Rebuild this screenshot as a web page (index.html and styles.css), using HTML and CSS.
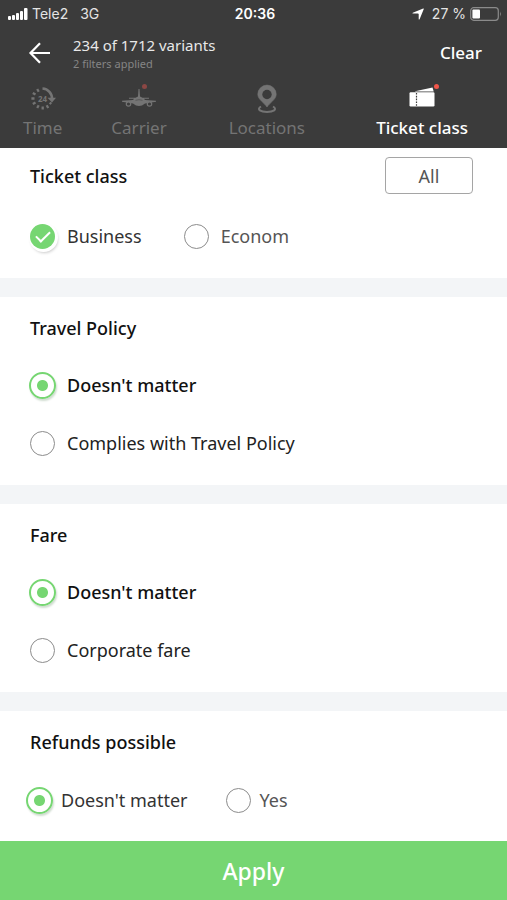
FILE: index.html
```html
<!DOCTYPE html>
<html lang="en">
<head>
<meta charset="utf-8">
<meta name="viewport" content="width=device-width, initial-scale=1">
<title>Filters</title>
<link rel="stylesheet" href="styles.css">
</head>
<body>
<header class="top">
  <div class="status">
    <div class="status-left">
      <svg class="signal" width="20" height="12" viewBox="0 0 20 12" fill="#fff" aria-hidden="true"><rect x="0" y="8" width="3" height="4" rx="1"/><rect x="4" y="7" width="3" height="5" rx="1"/><rect x="8" y="5" width="3" height="7" rx="1"/><rect x="12" y="3" width="3" height="9" rx="1"/><rect x="16" y="0" width="3.500" height="12" rx="1"/></svg>
      <span>Tele2</span>
      <span class="network">3G</span>
    </div>
    <time class="clock">20:36</time>
    <div class="status-right">
      <svg width="12" height="12" viewBox="0 0 12 12" fill="#fff" aria-hidden="true"><path d="M11.200.6Q12 .3 11.700 1.200L7.600 11.200Q7 12 6.700 11.200V5.900Q6.600 5.500 6 5.500H.8Q0 5.200.8 4.700z"/></svg>
      <span>27 %</span>
      <svg width="32" height="14" viewBox="0 0 32 14" aria-hidden="true"><rect x=".7" y=".7" width="27.600" height="12.600" rx="3" fill="none" stroke="#8b8b8b" stroke-width="1.200"/><rect x="2.400" y="2.400" width="7.600" height="9.200" rx="1" fill="#fff"/><path d="M30 4.600q1.800 2.400 0 4.800z" fill="#8b8b8b"/></svg>
    </div>
  </div>
  <div class="bar">
    <button class="back" type="button" aria-label="Back"><svg width="22" height="22" viewBox="0 0 22 22" fill="none" stroke="#fff" stroke-width="2.200"><path d="M12 1.200 2.500 11l9.500 9.800M2.500 11H22"/></svg></button>
    <div class="summary">
      <h1 class="count">234 of 1712 variants</h1>
      <p class="applied">2 filters applied</p>
    </div>
    <button class="clear" type="button">Clear</button>
  </div>
  <nav class="tabs">
    <a class="tab" href="#time">
      <svg width="26" height="26" viewBox="0 0 26 26" fill="none" stroke="#747474" aria-hidden="true"><path d="M12.500 2.500A10 10 0 0 1 22 13" stroke-width="2.600"/><path d="M17.500 11.800H26l-4 4.800z" fill="#747474" stroke="none"/><path d="M8.700 5.700 7.200 3M5.500 8.500 2.800 7M4.500 12.500H1.400M5.500 16.500l-2.700 1.500M8.700 19.300 7.200 22M12.700 20.500v3M16.700 19.300l1.500 2.700M19.600 16.700l1.800 1.200" stroke-width="2.300"/><text x="12.500" y="15.500" text-anchor="middle" class="hours">24</text></svg>
      <span>Time</span>
    </a>
    <a class="tab carrier" href="#carrier">
      <span class="glyph"><svg width="36" height="26" viewBox="0 2 36 26" fill="#747474" aria-hidden="true"><path d="M17.500 5h1l.5 7.500 2.500 1.200H28v1h-5l1 1.300 11 .8v1l-11 1.700q-3 2.500-6 2.500t-6-2.500L1 17.800v-1l11-.8 1-1.300H8v-1h6.500l2.500-1.200z"/><path d="M14.500 16.300q3.500-1.200 7 0" fill="none" stroke="#3b3b3b" stroke-width=".5"/><g fill="#3b3b3b" stroke="#747474" stroke-width="1.200"><circle cx="7.500" cy="20" r="2.200"/><circle cx="28.500" cy="20" r="2.200"/></g></svg><i class="dot dim"></i></span>
      <span>Carrier</span>
    </a>
    <a class="tab locations" href="#locations">
      <svg width="22" height="30" viewBox="0 0 22 30" fill="none" stroke="#747474" aria-hidden="true"><path d="M11 23C8 18.500 1.800 15.500 1.800 10.300a9.200 9.200 0 0 1 18.400 0C20.200 15.500 14 18.500 11 23z" fill="#747474" stroke-width=".6"/><circle cx="11" cy="10.500" r="4.700" fill="#3b3b3b" stroke="none"/><path d="M5 22.500c-5 3 0 5.500 6 5.500s11-2.500 6-5.500" stroke-width="2"/></svg>
      <span>Locations</span>
    </a>
    <a class="tab active" href="#class" aria-current="page">
      <span class="glyph"><svg width="26" height="26" viewBox="0 0 26 26" fill="#fff" aria-hidden="true"><path d="M6 5.300 23.500 1.500 24.700 5.500H6z"/><rect x=".5" y="6.300" width="25" height="14.200" rx="1.200"/><path d="M7.500 7v13" stroke="#3b3b3b" stroke-width="1.200" stroke-dasharray="1.600 1.200"/></svg><i class="dot"></i></span>
      <span>Ticket class</span>
    </a>
  </nav>
</header>
<main>
  <section class="card first">
    <div class="card-head"><h2>Ticket class</h2><button class="all" type="button">All</button></div>
    <div class="row">
      <label class="option"><input type="checkbox" checked><span class="soft">Business</span></label>
      <label class="option"><input type="checkbox"><span class="muted">Econom</span></label>
    </div>
  </section>
  <section class="card">
    <h2>Travel Policy</h2>
    <div class="stack">
      <label class="option"><input type="radio" name="policy" checked><span class="strong">Doesn't matter</span></label>
      <label class="option"><input type="radio" name="policy"><span>Complies with Travel Policy</span></label>
    </div>
  </section>
  <section class="card">
    <h2>Fare</h2>
    <div class="stack">
      <label class="option"><input type="radio" name="fare" checked><span class="strong">Doesn't matter</span></label>
      <label class="option"><input type="radio" name="fare"><span>Corporate fare</span></label>
    </div>
  </section>
  <section class="card last">
    <h2>Refunds possible</h2>
    <div class="row tight">
      <label class="option"><input type="radio" name="refund" checked><span class="soft">Doesn't matter</span></label>
      <label class="option"><input type="radio" name="refund"><span class="muted">Yes</span></label>
    </div>
  </section>
</main>
<button class="apply" type="submit">Apply</button>
</body>
</html>
```

FILE: styles.css
```css
* { box-sizing: border-box; }
body {
  margin: 0;
  min-height: 100vh;
  display: flex;
  flex-direction: column;
  background: #f3f5f7;
  color: #222;
  font: 18px/24px "Noto Sans", "Open Sans", sans-serif;
}
h1, h2, p { margin: 0; }
button { font: inherit; border: 0; padding: 0; background: none; color: inherit; cursor: pointer; }
svg { display: block; }

.top { background: #3b3b3b; color: #fff; padding-bottom: 8px; }
.status {
  display: grid;
  grid-template-columns: 1fr auto 1fr;
  align-items: center;
  height: 28px;
  padding: 0 5px 0 8px;
  font: 14px/20px Inter, sans-serif;
  color: #e4e4e4;
}
.status-left, .status-right { display: flex; align-items: center; gap: 4px; }
.status-right { justify-content: flex-end; gap: 8px; }
.status-right span { margin-right: -4px; }
.network { margin-left: 8px; }
.clock { font-weight: 600; color: #fff; }
.bar { display: flex; align-items: center; height: 50px; padding: 0 25px 0 28px; }
.back { margin-right: 23px; }
.summary { flex: 1; }
.count { font-size: 15px; line-height: 22px; font-weight: 400; color: #e8e8e8; }
.applied { font-size: 11px; line-height: 16px; color: #858585; }
.clear { font-size: 17px; font-weight: 500; }
.tabs { display: flex; gap: 49px; padding: 6px 39px 0 23px; }
.tab {
  display: flex;
  flex-direction: column;
  align-items: center;
  gap: 2px;
  color: #747474;
  font-size: 17px;
  text-decoration: none;
}
.tab svg { height: 30px; }
.locations { margin-left: 13px; }
.tab.active { margin-left: auto; color: #fff; font-weight: 500; }
.hours { font: 700 8px "Noto Sans", sans-serif; fill: #747474; stroke: none; }
.glyph { position: relative; }
.dot { position: absolute; top: 0; right: -4px; width: 5px; height: 5px; border-radius: 50%; background: #f0564a; }
.dot.dim { right: 10px; background: #8b4744; }

main { display: flex; flex-direction: column; gap: 19px; flex: 1; }
.card { background: #fff; padding: 18px 30px 29px; }
.card.first { padding-top: 9px; }
.card.last { flex: 1; padding-bottom: 28px; }
.card-head { display: flex; justify-content: space-between; align-items: center; padding-right: 4px; }
h2 { font-size: 18px; line-height: 26px; font-weight: 500; color: #111; }
.all { width: 88px; height: 37px; border: 1px solid #a5a5a5; border-radius: 4px; color: #555; }
.row { display: flex; gap: 42px; margin-top: 29px; }
.stack { display: flex; flex-direction: column; gap: 32px; margin-top: 31px; }
.row.tight { gap: 38px; margin: 32px 0 0 -3px; }
.option { display: flex; align-items: center; gap: 12px; height: 26px; }
.tight .option { gap: 9px; }
.strong { color: #111; font-weight: 500; }
.soft { color: #333; }
.muted { color: #555; }
input {
  appearance: none;
  margin: 0;
  width: 25px;
  height: 25px;
  border: 1px solid #8c8c8c;
  border-radius: 50%;
  background: #fff;
}
input[type="radio"]:checked {
  border: 2px solid #76d672;
  background: radial-gradient(circle, #76d672 5px, #fff 6px);
  box-shadow: 1px 2px 2px #d0dcd0;
  width: 27px;
  height: 27px;
  margin: 0 -1px;
}
input[type="checkbox"]:checked {
  display: grid;
  place-items: center;
  border: 0;
  background: #76d672;
  box-shadow: 1px 1px 0 2px #fff, 2px 3px 3px 1px #ccc;
}
input[type="checkbox"]:checked::after {
  content: "";
  width: 12px;
  height: 6px;
  margin-top: -3px;
  border: solid #fff;
  border-width: 0 0 2px 2px;
  transform: rotate(-45deg);
}
.apply { height: 59px; background: #76d672; color: #fff; font-size: 23px; font-weight: 500; }
```
